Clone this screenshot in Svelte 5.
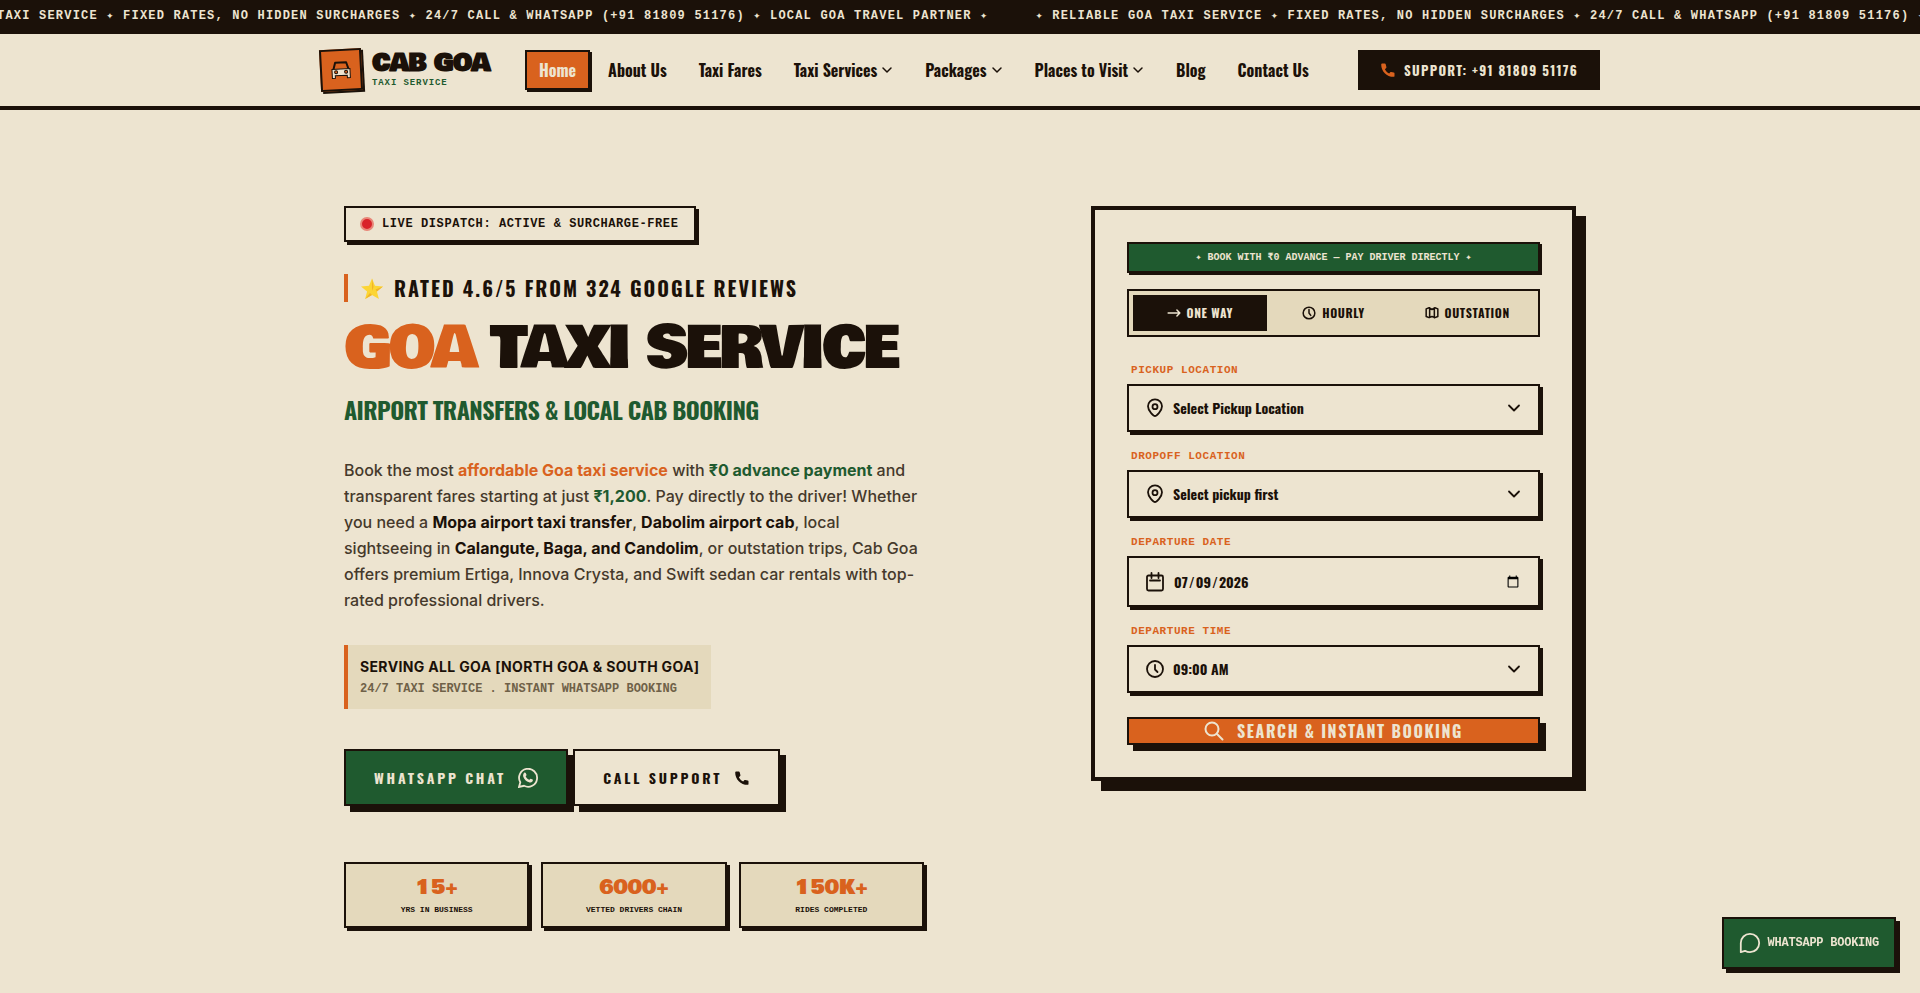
<script lang="ts">
	const tickerText =
		"✦ RELIABLE GOA TAXI SERVICE ✦ FIXED RATES, NO HIDDEN SURCHARGES ✦ 24/7 CALL & WHATSAPP (+91 81809 51176) ✦ LOCAL GOA TRAVEL PARTNER ✦";

	const links = [
		{ label: "Home", active: true },
		{ label: "About Us" },
		{ label: "Taxi Fares" },
		{ label: "Taxi Services", menu: true },
		{ label: "Packages", menu: true },
		{ label: "Places to Visit", menu: true },
		{ label: "Blog" },
		{ label: "Contact Us" },
	];

	const stats = [
		{ value: "15+", label: "YRS IN BUSINESS" },
		{ value: "6000+", label: "VETTED DRIVERS CHAIN" },
		{ value: "150K+", label: "RIDES COMPLETED" },
	];

	const tabs = ["ONE WAY", "HOURLY", "OUTSTATION"];

	let tab = "ONE WAY";
	let date = "2026-07-09";
</script>

<div class="ticker">
	<div class="track">
		<span>{tickerText}</span>
		<span>{tickerText}</span>
	</div>
</div>

<header>
	<div class="bar">
		<a class="logo" href="#home">
			<span class="mark">
				<svg viewBox="0 0 24 24" width="24" height="24" aria-hidden="true">
					<path d="M4.500 11 6.500 4.500h11l2 6.500" fill="none" stroke="#1b1109" stroke-width="2" stroke-linejoin="round" />
					<path d="M3 11h18v9h-3v-2.500H6V20H3z" fill="#ede4d0" stroke="#1b1109" />
					<circle cx="7" cy="14" r="1.500" fill="#d9621e" stroke="#1b1109" />
					<circle cx="17" cy="14" r="1.500" fill="#d9621e" stroke="#1b1109" />
				</svg>
			</span>
			<span class="brand">
				<strong>CAB GOA</strong>
				<small>TAXI SERVICE</small>
			</span>
		</a>
		<nav>
			{#each links as link}
				<a href="#{link.label}" class:active={link.active}>
					{link.label}
					{#if link.menu}
						<svg class="line" viewBox="0 0 12 12" width="12" height="12" aria-hidden="true"><path d="m2 4 4 4 4-4" /></svg>
					{/if}
				</a>
			{/each}
		</nav>
		<a class="support" href="tel:+918180951176">
			<svg viewBox="0 0 16 16" width="16" height="16" aria-hidden="true">
				<path fill="#d9621e" d="M4.800 1.500H2.100C1.600 1.500 1.200 1.900 1.200 2.400c0 6.900 5.500 12.400 12.400 12.400.5 0 .9-.4.900-.9v-2.600c0-.5-.3-.8-.8-.9l-2.400-.5c-.3 0-.6 0-.8.2l-1.300 1.400c-2-1-3.400-2.500-4.300-4.300l1.300-1.300c.2-.2.300-.5.200-.8l-.7-2.900c-.1-.4-.4-.7-.9-.7z" />
			</svg>
			SUPPORT: +91 81809 51176
		</a>
	</div>
</header>

<main>
	<section class="intro">
		<div class="live"><i></i>LIVE DISPATCH: ACTIVE &amp; SURCHARGE-FREE</div>
		<div class="rated">
			<svg viewBox="0 0 24 24" width="24" height="24" aria-hidden="true">
				<path fill="#fcd535" d="m12 2.500 3 7.300 8 .6-6.100 5.100 2 7.600-6.900-4.200-6.900 4.200 2-7.600L1 10.400l8-.6z" />
				<path fill="#f0b429" d="m12 2.500 1.500 8.500L12 15zM23 10.400l-7.500 3.200 1.400 1.900zM5.100 23.100 10 17l2 1.900z" />
			</svg>
			RATED 4.6/5 FROM 324 GOOGLE REVIEWS
		</div>
		<h1><span>GOA</span> TAXI SERVICE</h1>
		<h2>AIRPORT TRANSFERS &amp; LOCAL CAB BOOKING</h2>
		<p class="lead">
			Book the most <b class="orange">affordable Goa taxi service</b> with
			<b class="green">₹0 advance payment</b> and transparent fares starting at just
			<b class="green">₹1,200</b>. Pay directly to the driver! Whether you need a
			<b>Mopa airport taxi transfer</b>, <b>Dabolim airport cab</b>, local sightseeing in
			<b>Calangute, Baga, and Candolim</b>, or outstation trips, Cab Goa offers premium Ertiga,
			Innova Crysta, and Swift sedan car rentals with top-rated professional drivers.
		</p>
		<div class="serving">
			<strong>SERVING ALL GOA [NORTH GOA &amp; SOUTH GOA]</strong>
			<span>24/7 TAXI SERVICE . INSTANT WHATSAPP BOOKING</span>
		</div>
		<div class="actions">
			<a class="whatsapp" href="#whatsapp">
				WHATSAPP CHAT
				<svg viewBox="2 2 20 20" width="20" height="20" aria-hidden="true">
					<path fill="none" stroke="currentColor" stroke-width="1.800" d="m3 21 1.300-4.700A9 9 0 1 1 8 19.800z" />
					<path fill="currentColor" d="M8.200 6.700c.5-.5 1.200-.3 1.500.3l.8 1.800c.2.500-.8 1.300-.8 1.600.7 1.500 2 2.700 3.500 3.400.4.1 1-1.300 1.500-1.100l1.900.9c.5.300.3 1.400-.2 2-.8.800-2.100 1.100-3.300.7-2.800-.9-5-3.100-5.900-5.900-.3-1.300.1-2.800 1-3.700z" />
				</svg>
			</a>
			<a class="call" href="tel:+918180951176">
				CALL SUPPORT
				<svg viewBox="0 0 16 16" width="16" height="16" aria-hidden="true">
					<path fill="currentColor" d="M4.800 1.500H2.100C1.600 1.500 1.200 1.900 1.200 2.400c0 6.900 5.500 12.400 12.400 12.400.5 0 .9-.4.900-.9v-2.600c0-.5-.3-.8-.8-.9l-2.400-.5c-.3 0-.6 0-.8.2l-1.300 1.400c-2-1-3.400-2.500-4.300-4.300l1.300-1.300c.2-.2.300-.5.200-.8l-.7-2.900c-.1-.4-.4-.7-.9-.7z" />
				</svg>
			</a>
		</div>
		<div class="stats">
			{#each stats as stat}
				<div>
					<strong>{stat.value}</strong>
					<span>{stat.label}</span>
				</div>
			{/each}
		</div>
	</section>

	<form class="booking">
		<div class="advance">✦ BOOK WITH ₹0 ADVANCE — PAY DRIVER DIRECTLY ✦</div>
		<div class="tabs">
			{#each tabs as name}
				<button type="button" class:active={tab === name} on:click={() => (tab = name)}>
					<svg class="line" viewBox="0 0 24 24" width="14" height="14" aria-hidden="true">
						{#if name === "ONE WAY"}
							<path d="M2 12h20M17 7l5 5-5 5" />
						{:else if name === "HOURLY"}
							<circle cx="12" cy="12" r="10" /><path d="M12 6v6l3 4" />
						{:else}
							<path d="M2 5v13l5 2 5-2 5 2 5-2V5l-5-2-5 3-5-3zM8 3v16M16 4v16" />
						{/if}
					</svg>
					{name}
				</button>
			{/each}
		</div>

		<label for="pickup">PICKUP LOCATION</label>
		<div class="field">
			<svg class="line" viewBox="0 0 20 20" width="20" height="20" aria-hidden="true">
				<path d="M10 18c-1 0-7-4.700-7-9.700a7 7 0 0 1 14 0c0 5-6 9.700-7 9.700z" /><circle cx="10" cy="8.700" r="2.500" />
			</svg>
			<select id="pickup"><option>Select Pickup Location</option></select>
			<svg class="line" viewBox="0 0 16 16" width="16" height="16" aria-hidden="true"><path d="m3 5.500 5 5 5-5" /></svg>
		</div>

		<label for="dropoff">DROPOFF LOCATION</label>
		<div class="field">
			<svg class="line" viewBox="0 0 20 20" width="20" height="20" aria-hidden="true">
				<path d="M10 18c-1 0-7-4.700-7-9.700a7 7 0 0 1 14 0c0 5-6 9.700-7 9.700z" /><circle cx="10" cy="8.700" r="2.500" />
			</svg>
			<select id="dropoff"><option>Select pickup first</option></select>
			<svg class="line" viewBox="0 0 16 16" width="16" height="16" aria-hidden="true"><path d="m3 5.500 5 5 5-5" /></svg>
		</div>

		<label for="date">DEPARTURE DATE</label>
		<div class="field date">
			<svg class="line" viewBox="0 0 20 20" width="20" height="20" aria-hidden="true">
				<rect x="2" y="3.500" width="16" height="15" rx="1.500" /><path d="M6.500 1v5M13.500 1v5M5 8.500h10" />
			</svg>
			<input id="date" type="date" bind:value={date} />
		</div>

		<label for="time">DEPARTURE TIME</label>
		<div class="field">
			<svg class="line" viewBox="0 0 20 20" width="20" height="20" aria-hidden="true">
				<circle cx="10" cy="10" r="8" /><path d="M10 6v4.500l2.500 2.500" />
			</svg>
			<select id="time"><option>09:00 AM</option></select>
			<svg class="line" viewBox="0 0 16 16" width="16" height="16" aria-hidden="true"><path d="m3 5.500 5 5 5-5" /></svg>
		</div>

		<button class="search" type="button">
			<svg class="line" viewBox="0 0 20 20" width="20" height="20" aria-hidden="true">
				<circle cx="8" cy="8" r="6.500" /><path d="m13 13 5.500 5.500" />
			</svg>
			SEARCH &amp; INSTANT BOOKING
		</button>
	</form>
</main>

<a class="float" href="#whatsapp">
	<svg class="line" viewBox="0 0 24 24" width="24" height="24" aria-hidden="true">
		<path d="M2.800 21.200V12A9.200 9.200 0 1 1 12 21.200c-2 0-3.500-.5-5-1.400z" />
	</svg>
	WHATSAPP BOOKING
</a>

<style>
	:global(body) {
		margin: 0;
		background: #ede4d0;
		color: #1b1109;
		font-family: Inter, sans-serif;
		overflow-x: hidden;
		--ink: #1b1109;
		--paper: #ede4d0;
		--sand: #e4d9bc;
		--orange: #d9621e;
		--green: #1f5a2f;
		--black: "Bowlby One", "Archivo Black", Inter, sans-serif;
		--condensed: Oswald, "Liberation Sans Narrow", sans-serif;
		--mono: "Liberation Mono", monospace;
	}

	a {
		color: inherit;
		text-decoration: none;
	}

	.line {
		fill: none;
		stroke: currentColor;
		stroke-width: 1.8;
		stroke-linecap: round;
		stroke-linejoin: round;
		flex: none;
	}

	.ticker {
		background: var(--ink);
		color: var(--paper);
		font: bold 12px/18px var(--mono);
		letter-spacing: 0.1em;
		padding: 7px 0 9px;
		overflow: hidden;
		white-space: nowrap;
	}
	.track {
		display: flex;
		gap: 47px;
		margin-left: -129px;
	}
	.track span {
		flex: none;
	}

	header {
		border-bottom: 4px solid var(--ink);
	}
	.bar {
		display: flex;
		align-items: center;
		justify-content: space-between;
		max-width: 1280px;
		height: 72px;
		margin: 0 auto;
	}
	.logo {
		display: flex;
		align-items: center;
		gap: 10px;
	}
	.mark {
		display: grid;
		place-items: center;
		width: 38px;
		height: 38px;
		border: 2px solid var(--ink);
		background: var(--orange);
		box-shadow: 2px 2px 0 var(--ink);
		transform: rotate(-3deg);
	}
	.brand {
		display: flex;
		flex-direction: column;
	}
	.brand strong {
		font: 900 24px/26px var(--black);
		letter-spacing: -0.025em;
	}
	.brand small {
		font: bold 9px/14px var(--mono);
		letter-spacing: 0.1em;
		color: var(--green);
	}
	nav {
		display: flex;
		gap: 4px;
	}
	nav a {
		display: flex;
		align-items: center;
		gap: 4px;
		height: 36px;
		padding: 0 12px;
		border: 2px solid transparent;
		font: bold 16px/24px var(--condensed);
		white-space: nowrap;
	}
	nav .line {
		stroke-width: 1.5;
	}
	nav a.active {
		background: var(--orange);
		border-color: var(--ink);
		color: var(--paper);
		box-shadow: 2px 2px 0 var(--ink);
	}
	.support {
		display: flex;
		align-items: center;
		gap: 8px;
		height: 40px;
		padding: 0 22px;
		background: var(--ink);
		color: var(--paper);
		font: bold 13px/20px var(--condensed);
		letter-spacing: 0.1em;
		white-space: nowrap;
	}

	main {
		display: grid;
		grid-template-columns: minmax(0, 580px) 485px;
		justify-content: space-between;
		align-items: start;
		max-width: 1232px;
		margin: 0 auto;
		padding: 96px 24px 64px;
	}
	.live {
		display: flex;
		align-items: center;
		gap: 8px;
		width: fit-content;
		padding: 8px 16px 8px 14px;
		border: 2px solid var(--ink);
		box-shadow: 3px 3px 0 var(--ink);
		font: bold 12px/16px var(--mono);
		letter-spacing: 0.05em;
	}
	.live i {
		width: 10px;
		height: 10px;
		border: 2px solid #e88678;
		border-radius: 50%;
		background: #d9222a;
	}
	.rated {
		display: flex;
		align-items: center;
		gap: 10px;
		margin-top: 32px;
		padding-left: 12px;
		border-left: 4px solid var(--orange);
		font: bold 20px/28px var(--condensed);
		letter-spacing: 0.1em;
	}
	h1 {
		margin: 14px 0 0;
		font: 400 58px/64px var(--black);
		letter-spacing: -0.05em;
		white-space: nowrap;
	}
	h1 span {
		color: var(--orange);
	}
	h2 {
		margin: 13px 0 0;
		font: bold 24px/32px var(--condensed);
		letter-spacing: -0.025em;
		color: var(--green);
	}
	.lead {
		max-width: 576px;
		margin: 32px 0;
		font-size: 16px;
		line-height: 26px;
		font-weight: 500;
		color: #45392b;
	}
	.lead b {
		font-weight: 700;
		color: var(--ink);
	}
	.lead .orange {
		color: var(--orange);
	}
	.lead .green {
		color: var(--green);
	}
	.serving {
		display: flex;
		flex-direction: column;
		gap: 4px;
		width: fit-content;
		padding: 12px;
		border-left: 4px solid var(--orange);
		background: var(--sand);
	}
	.serving strong {
		font-size: 14px;
		line-height: 20px;
		letter-spacing: 0.025em;
	}
	.serving span {
		font: bold 12px/16px var(--mono);
		color: #6f6148;
	}
	.actions {
		display: flex;
		gap: 5px;
		margin-top: 40px;
	}
	.actions a {
		display: flex;
		align-items: center;
		gap: 12px;
		height: 53px;
		padding: 0 28px;
		border: 2px solid var(--ink);
		box-shadow: 6px 6px 0 var(--ink);
		background: var(--paper);
		font: bold 14px/20px var(--condensed);
		letter-spacing: 0.2em;
		white-space: nowrap;
	}
	.actions .whatsapp {
		background: var(--green);
		color: var(--paper);
	}
	.stats {
		display: grid;
		grid-template-columns: repeat(3, 1fr);
		gap: 12px;
		margin-top: 56px;
	}
	.stats div {
		display: flex;
		flex-direction: column;
		align-items: center;
		padding: 10px 0 8px;
		border: 2px solid var(--ink);
		box-shadow: 3px 3px 0 var(--ink);
		background: var(--sand);
	}
	.stats strong {
		font: 400 20px/28px var(--black);
		color: var(--orange);
	}
	.stats span {
		font: bold 8px/16px var(--mono);
	}

	.booking {
		padding: 32px;
		border: 4px solid var(--ink);
		box-shadow: 10px 10px 0 var(--ink);
	}
	.advance {
		padding: 6px 0;
		border: 2px solid var(--ink);
		box-shadow: 2px 2px 0 var(--ink);
		background: var(--green);
		color: var(--paper);
		font: bold 10px/15px var(--mono);
		text-align: center;
	}
	.tabs {
		display: grid;
		grid-template-columns: repeat(3, 1fr);
		margin: 16px 0 25px;
		padding: 4px;
		border: 2px solid var(--ink);
		background: var(--sand);
	}
	.tabs button {
		display: flex;
		align-items: center;
		justify-content: center;
		gap: 6px;
		height: 36px;
		padding: 0;
		border: 0;
		background: none;
		color: var(--ink);
		font: bold 12px/16px var(--condensed);
		letter-spacing: 0.05em;
	}
	.tabs .line {
		stroke-width: 2.6;
	}
	.tabs button.active {
		background: var(--ink);
		color: var(--paper);
	}
	label {
		display: block;
		margin: 0 4px 6px;
		font: bold 11px/16px var(--mono);
		letter-spacing: 0.05em;
		color: var(--orange);
	}
	.field {
		display: flex;
		align-items: center;
		gap: 8px;
		height: 44px;
		margin-bottom: 16px;
		padding: 0 16px;
		border: 2px solid var(--ink);
		box-shadow: 3px 3px 0 var(--ink);
	}
	.field.date {
		height: 47px;
	}
	.field select,
	.field input {
		flex: 1;
		min-width: 0;
		padding: 0;
		border: 0;
		appearance: none;
		background: none;
		color: var(--ink);
		font: bold 14px/20px var(--condensed);
	}
	.search {
		display: flex;
		align-items: center;
		justify-content: center;
		gap: 13px;
		width: 100%;
		height: 28px;
		margin-top: 24px;
		padding: 0;
		border: 2px solid var(--ink);
		box-shadow: 6px 6px 0 var(--ink);
		background: var(--orange);
		color: var(--paper);
		font: bold 16px/24px var(--condensed);
		letter-spacing: 0.1em;
	}
	.search .line {
		stroke-width: 2;
	}

	.float {
		position: fixed;
		right: 24px;
		bottom: 24px;
		display: flex;
		align-items: center;
		gap: 6px;
		height: 48px;
		padding: 0 15px 0 14px;
		border: 2px solid var(--ink);
		box-shadow: 4px 4px 0 var(--ink);
		background: var(--green);
		color: var(--paper);
		font: bold 12px/16px var(--mono);
		letter-spacing: -0.02em;
	}
</style>
